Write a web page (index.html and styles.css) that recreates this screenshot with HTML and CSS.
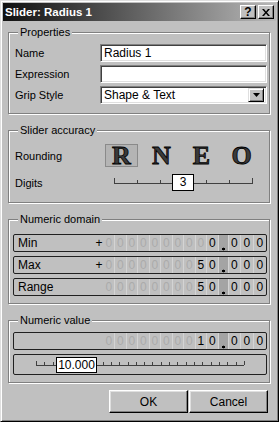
FILE: index.html
```html
<!DOCTYPE html>
<html lang="en">
<head>
  <meta charset="UTF-8">
  <title>Slider: Radius 1</title>
  <link rel="stylesheet" href="styles.css">
</head>
<body>
  <div class="window">
    <div class="titlebar">
      <span class="title">Slider: Radius 1</span>
      <div class="cap-btns">
        <div class="cap-btn">?</div>
        <div class="cap-btn">
          <svg width="8" height="7" viewBox="0 0 8 7"><path d="M0 0h2l2 2.5L6 0h2L5 3.5 8 7H6L4 4.5 2 7H0l3-3.5z" fill="#000"/></svg>
        </div>
      </div>
    </div>

    <div class="content">
      <div class="group props">
        <div class="group-title">Properties</div>
        <div class="rows">
          <div class="field"><span class="label">Name</span><div class="input">Radius 1</div></div>
          <div class="field"><span class="label">Expression</span><div class="input"></div></div>
          <div class="field">
            <span class="label">Grip Style</span>
            <div class="input select">
              <span class="select-text">Shape &amp; Text</span>
              <span class="drop-btn">
                <svg width="7" height="4" viewBox="0 0 7 4"><path d="M0 0h7L3.5 4z" fill="#000"/></svg>
              </span>
            </div>
          </div>
        </div>
      </div>

      <div class="group accuracy">
        <div class="group-title">Slider accuracy</div>
        <div class="field round-row">
          <span class="label">Rounding</span>
          <div class="letters">
            <span class="letter selected">R</span>
            <span class="letter">N</span>
            <span class="letter">E</span>
            <span class="letter">O</span>
          </div>
        </div>
        <div class="field digits-row">
          <span class="label">Digits</span>
          <div class="mini-slider">
            <svg width="167" height="17" viewBox="0 0 167 17">
              <g stroke="#404040" stroke-width="1" fill="none">
                <path d="M14 9.5h138"/>
                <path d="M14.5 4v6M37.5 6v4M60.5 6v4M106.5 6v4M129.5 6v4M152.5 4v6"/>
              </g>
            </svg>
            <span class="thumb digits-thumb">3</span>
          </div>
        </div>
      </div>

      <div class="group numeric domain">
        <div class="group-title">Numeric domain</div>
        <div class="num-rows" id="domainRows"></div>
      </div>

      <div class="group numeric value">
        <div class="group-title">Numeric value</div>
        <div class="num-rows" id="valueRows"></div>
        <div class="value-slider">
          <svg width="252" height="19" viewBox="0 0 252 19" id="valueTicks"></svg>
          <span class="thumb value-thumb">10.000</span>
        </div>
      </div>

      <div class="buttons">
        <div class="btn default">OK</div>
        <div class="btn">Cancel</div>
      </div>
    </div>
  </div>

  <script>
    // build the digit rows: 10 integer digits, decimal point, 3 decimals
    function digitRow(label, sign, intPart) {
      const row = document.createElement('div');
      row.className = 'num-row';
      let html = '<span class="num-label">' + label + '</span>';
      html += '<span class="sign">' + sign + '</span>';
      const digits = intPart.padStart(10, '0');
      const firstSig = digits.search(/[1-9]/);
      for (let i = 0; i < 10; i++) {
        const on = (firstSig >= 0 && i >= firstSig) || i === 9;
        html += '<span class="cell' + (on ? ' on' : '') + '">' + digits[i] + '</span>';
      }
      html += '<span class="dot-cell"></span>';
      for (let i = 0; i < 3; i++) html += '<span class="cell frac on">0</span>';
      row.innerHTML = html;
      return row;
    }

    const domain = document.getElementById('domainRows');
    domain.appendChild(digitRow('Min', '+', '0'));
    domain.appendChild(digitRow('Max', '+', '50'));
    domain.appendChild(digitRow('Range', '', '50'));
    document.getElementById('valueRows').appendChild(digitRow('', '', '10'));

    // ticks of the value slider
    const ticks = document.getElementById('valueTicks');
    let d = 'M22 10.5h208';
    for (let i = 0; i <= 25; i++) {
      const x = Math.round(22 + i * 208 / 25) + 0.5;
      const top = (i === 0 || i === 25) ? 6 : 7;
      d += 'M' + x + ' ' + top + 'v4';
    }
    ticks.innerHTML = '<path d="' + d + '" stroke="#404040" fill="none"/>';
  </script>
</body>
</html>
```

FILE: styles.css
```css
* {
  box-sizing: border-box;
}

body {
  margin: 0;
  background: #c0c0c0;
  font-family: "Liberation Sans", Arial, sans-serif;
  font-size: 11px;
  color: #000;
}

.window {
  width: 279px;
  height: 422px;
  background: #c0c0c0;
  border: 1px solid;
  border-color: #dfdfdf #000 #000 #dfdfdf;
  box-shadow: inset 1px 1px #fff, inset -1px -1px #808080;
  padding: 2px;
}

.titlebar {
  height: 18px;
  display: flex;
  align-items: center;
  padding: 0 2px 0 2px;
  background: linear-gradient(90deg, #101010, #b8b8b8);
}

.title {
  flex: 1;
  color: #fff;
  font-weight: bold;
  font-size: 11.5px;
}

.cap-btns {
  display: flex;
  gap: 2px;
}

.cap-btn {
  width: 16px;
  height: 14px;
  display: flex;
  align-items: center;
  justify-content: center;
  background: #c0c0c0;
  border: 1px solid;
  border-color: #fff #000 #000 #fff;
  box-shadow: inset -1px -1px #808080;
  font-weight: bold;
  font-size: 12px;
  line-height: 12px;
}

.content {
  padding: 11px 6px 0 5px;
}

/* etched group boxes */
.group {
  border: 1px solid #808080;
  box-shadow: 1px 1px 0 #fff, inset 1px 1px 0 #fff;
  padding: 0 2px 9px 6px;
}

.group + .group {
  margin-top: 16px;
}

.group-title {
  width: fit-content;
  margin: -7px 0 0 3px;
  padding: 0 2px;
  line-height: 13px;
  background: #c0c0c0;
}

.rows {
  margin-top: 5px;
  display: flex;
  flex-direction: column;
  gap: 3px;
}

.field {
  display: flex;
  align-items: center;
}

.label {
  width: 85px;
}

.input {
  width: 167px;
  height: 18px;
  background: #fff;
  border: 1px solid;
  border-color: #808080 #fff #fff #808080;
  box-shadow: inset 1px 1px #404040, inset -1px -1px #dfdfdf;
  padding: 0 3px;
  line-height: 16px;
  font-size: 12px;
}

.select {
  display: flex;
  align-items: center;
  padding-right: 2px;
}

.select-text {
  flex: 1;
}

.drop-btn {
  width: 16px;
  height: 14px;
  display: flex;
  align-items: center;
  justify-content: center;
  background: #c0c0c0;
  border: 1px solid;
  border-color: #dfdfdf #000 #000 #dfdfdf;
  box-shadow: inset 1px 1px #fff, inset -1px -1px #808080;
}

/* slider accuracy */
.accuracy {
  padding-bottom: 11px;
}

.round-row {
  margin-top: 7px;
  height: 23px;
}

.letters {
  margin-left: 1px;
  display: grid;
  grid-template-columns: repeat(4, 40px);
}

.letter {
  height: 23px;
  margin: 0 3px 0 4px;
  display: flex;
  align-items: center;
  justify-content: center;
  font-family: "Liberation Serif", "Times New Roman", serif;
  font-weight: bold;
  font-size: 26px;
  color: #3a3a3a;
  -webkit-text-stroke: 0.8px #000;
}

.letter.selected {
  background: #b4b4b4;
  border: 1px solid #8a8a8a;
}

.digits-row {
  margin-top: 7px;
  height: 17px;
}

.mini-slider {
  position: relative;
  width: 167px;
  height: 17px;
}

.mini-slider svg {
  display: block;
}

.thumb {
  position: absolute;
  background: #fff;
  border: 1px solid #000;
  text-align: center;
  font-size: 12px;
}

.digits-thumb {
  left: 72px;
  top: 0;
  width: 22px;
  height: 17px;
  line-height: 15px;
}

/* numeric groups */
.numeric {
  padding: 0 2px 7px 4px;
}

.numeric .group-title {
  margin-left: 5px;
}

.num-rows {
  display: flex;
  flex-direction: column;
  gap: 4px;
}

.domain .num-rows {
  margin-top: 8px;
}

.value .num-rows {
  margin-top: 5px;
}

.num-row {
  height: 18px;
  display: flex;
  border: 1px solid #202020;
  border-radius: 2px;
  font-size: 12px;
  line-height: 16px;
}

.num-label {
  flex: 1;
  padding-left: 4px;
}

.sign {
  width: 8px;
}

.cell {
  width: 11.5px;
  text-align: center;
  color: #ababab;
  border-right: 1px solid #d4d4d4;
}

.cell.on {
  color: #000;
}

.cell.frac {
  width: 12.5px;
}

.cell.frac:last-child {
  border-right: none;
}

.dot-cell {
  width: 10px;
  background: #a4a4a4 radial-gradient(circle at 50% 14px, #000 1.3px, transparent 1.6px);
  border-right: 1px solid #d4d4d4;
}

.value-slider {
  position: relative;
  margin-top: 4px;
  height: 21px;
  border: 1px solid #202020;
  border-radius: 2px;
}

.value-slider svg {
  display: block;
}

.value-thumb {
  left: 42px;
  top: 2px;
  width: 41px;
  height: 16px;
  line-height: 14px;
}

/* dialog buttons */
.buttons {
  margin-top: 7px;
  display: flex;
  justify-content: flex-end;
  gap: 1px;
  padding-right: 2px;
}

.btn {
  width: 79px;
  height: 23px;
  display: flex;
  align-items: center;
  justify-content: center;
  font-size: 12px;
  background: #c0c0c0;
  border: 1px solid;
  border-color: #fff #000 #000 #fff;
  box-shadow: inset -1px -1px #808080, inset 1px 1px #dfdfdf;
}
```
